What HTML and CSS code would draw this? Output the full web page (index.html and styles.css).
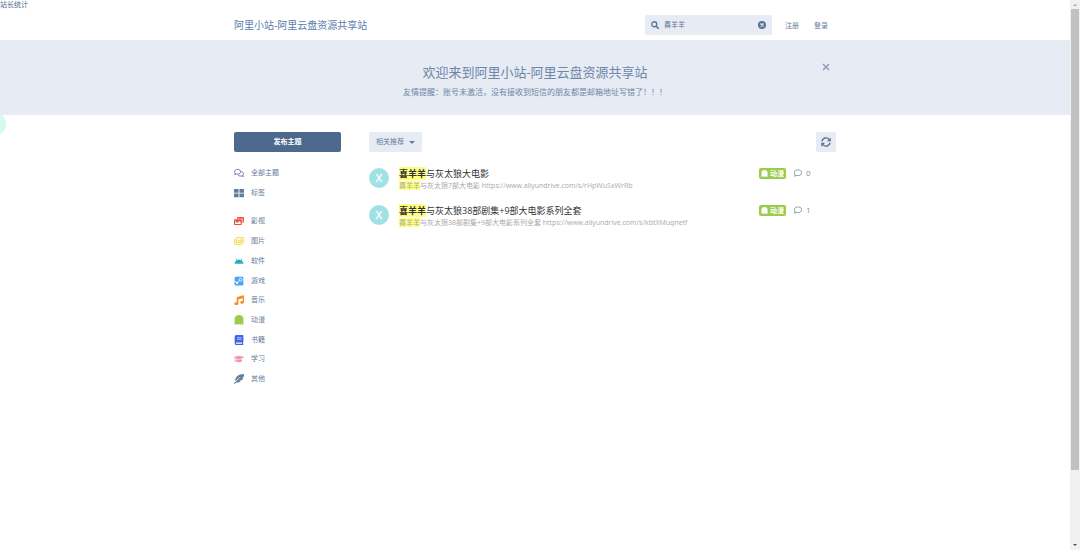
FILE: index.html
```html
<!DOCTYPE html>
<html lang="zh-CN">
<head>
    <meta charset="UTF-8">
    <meta name="viewport" content="width=device-width, initial-scale=1.0">
    <title>阿里小站-阿里云盘资源共享站</title>
    <link rel="stylesheet" href="styles.css">
</head>
<body>
    <svg class="sprite" aria-hidden="true">
        <symbol id="i-ghost" viewBox="0 0 16 16"><path d="M8 0C4 0 1 2.500 1 6v9.300l.8.500L4 14l2 2 2-2 2 2 2-2 2.200 1.800.8-.5V6c0-3.500-3-6-7-6z"/></symbol>
        <symbol id="i-comment" viewBox="0 0 512 512"><path d="M256 32C114.600 32 0 125.100 0 240c0 47.600 19.900 91.200 52.900 126.300C38 405.700 7 439.100 6.500 439.500c-6.600 7-8.400 17.200-4.600 26S14.400 480 24 480c61.500 0 110-25.700 139.100-46.300C192 442.800 223.200 448 256 448c141.400 0 256-93.100 256-208S397.400 32 256 32zm0 368c-26.700 0-53.100-4.100-78.400-12.100l-22.700-7.200-19.500 13.800c-14.300 10.100-33.900 21.400-57.500 29 7.300-12.100 14.400-25.700 19.900-40.200l10.600-28.100-20.600-21.800C69.700 314.100 48 282.200 48 240c0-88.200 93.300-160 208-160s208 71.800 208 160-93.300 160-208 160z"/></symbol>
    </svg>

    <a class="stats" href="#">站长统计</a>

    <header class="header">
        <div class="container header-row">
            <a class="site-title" href="#">阿里小站-阿里云盘资源共享站</a>
            <form class="search">
                <svg class="icon" viewBox="0 0 16 16"><circle cx="6.500" cy="6.500" r="5" fill="none" stroke="currentColor" stroke-width="2.600"/><path d="M10.500 10.500l4.200 4.200" stroke="currentColor" stroke-width="3" stroke-linecap="round"/></svg>
                <input type="text" value="喜羊羊" aria-label="搜索">
                <button type="button" class="clear" aria-label="清除">
                    <svg class="icon" viewBox="0 0 16 16"><circle cx="8" cy="8" r="8"/><path d="M5 5l6 6M11 5l-6 6" stroke="#e7ebf3" stroke-width="2.600"/></svg>
                </button>
            </form>
            <nav class="session">
                <a href="#">注册</a>
                <a href="#">登录</a>
            </nav>
        </div>
    </header>

    <section class="hero">
        <div class="container hero-inner">
            <button type="button" class="hero-close" aria-label="关闭">
                <svg class="icon" viewBox="0 0 16 16"><path d="M2 2l12 12M14 2L2 14" stroke="currentColor" stroke-width="3"/></svg>
            </button>
            <h1>欢迎来到阿里小站-阿里云盘资源共享站</h1>
            <p>友情提醒：账号未激活，没有接收到短信的朋友都是邮箱地址写错了！！！</p>
        </div>
    </section>

    <main class="container content">
        <aside class="sidebar">
            <button type="button" class="btn-primary">发布主题</button>
            <ul class="menu">
                <li><a href="#"><svg class="icon" viewBox="0 0 18 16"><path d="M6.500 1.500c3.200 0 5.600 1.900 5.600 4.300s-2.400 4.300-5.600 4.300c-.9 0-1.700-.1-2.400-.4L1.300 11l.9-2.500C1.400 7.800 1 6.800 1 5.800c0-2.400 2.400-4.300 5.500-4.300z" fill="none" stroke="currentColor" stroke-width="1.800"/><path d="M13.300 5.400c2.200.6 3.700 2 3.700 3.900 0 1-.4 1.900-1.100 2.600l1 2.400-2.900-1.100c-2.300.8-5.100.3-6.500-1.300" fill="none" stroke="currentColor" stroke-width="1.800"/></svg>全部主题</a></li>
                <li><a href="#"><svg class="icon" viewBox="0 0 16 16"><path d="M0 1.500h7.300v6H0zM8.700 1.500H16v6H8.700zM0 8.900h7.300v6H0zM8.700 8.900H16v6H8.700z"/></svg>标签</a></li>
                <li class="separator"></li>
                <li><a href="#"><svg class="icon red" viewBox="0 0 18 16"><path fill-rule="evenodd" d="M6 1h11q1 0 1 1v8q0 1-1 1h-2V5q0-1-1-1H5V2q0-1 1-1zm1 1v1.200h1.500V2zm7.500 0v1.200H16V2zm1.200 3v1.300h1.200V5zm0 3v1.300h1.200V8zM1 5h12q1 0 1 1v8q0 1-1 1H1q-1 0-1-1V6q0-1 1-1zm1 2v6.500h10v-3L9.500 8 6 11.500 4.500 10 3 11.500V7z"/></svg>影视</a></li>
                <li><a href="#"><svg class="icon yellow" viewBox="0 0 18 16"><path fill-rule="evenodd" d="M5 1h12q1 0 1 1v8q0 1.500-1.500 1.500h-12Q3 11.500 3 10V3q0-2 2-2zm.3 2v6.500h10.500V3zm1 5.500V7L8 5.500l1.500 1.300 3-3L15 6v2.500z"/><path d="M2 4v7q0 1.800 2 1.800h11.500Q15 15 13 15H2q-2 0-2-2V6q0-2 2-2z"/></svg>图片</a></li>
                <li><a href="#"><svg class="icon teal" viewBox="0 0 18 16"><path fill-rule="evenodd" d="M1 13c.2-3 1.600-5.200 3.900-6.500L3.300 3.800l.8-.5 1.700 2.800a9 9 0 0 1 6.400 0l1.700-2.800.8.500-1.600 2.700C15.400 7.800 16.800 10 17 13zm4.500-2.200a.8.800 0 1 0 0-1.600.8.800 0 0 0 0 1.600zm7 0a.8.800 0 1 0 0-1.600.8.800 0 0 0 0 1.600z"/></svg>软件</a></li>
                <li><a href="#"><svg class="icon blue" viewBox="0 0 16 16"><rect x="1" y="1" width="14" height="14" rx="2"/><path d="M1 8.500l4 2L8.500 8" fill="none" stroke="#fff" stroke-width="1.300"/><circle cx="5" cy="11" r="1.800" fill="#fff"/><circle cx="10.500" cy="6" r="2.300" fill="none" stroke="#fff" stroke-width="1.300"/></svg>游戏</a></li>
                <li><a href="#"><svg class="icon orange" viewBox="0 0 16 16"><path d="M5 3.200L15 .3q1-.2 1 .8v10.400c0 1.400-1.300 2.500-3 2.500s-3-.8-3-2.200 1.300-2.200 3-2.200l1 .1V5.200L7 7.300v6.200C7 15 5.700 16 3.700 16S.5 15.200.5 13.800s1.300-2.200 3-2.200l.8.100V4.200q0-.8.700-1z"/></svg>音乐</a></li>
                <li><a href="#"><svg class="icon green"><use href="#i-ghost"/></svg>动漫</a></li>
                <li><a href="#"><svg class="icon indigo" viewBox="0 0 16 16"><path fill-rule="evenodd" d="M4 0h10q1 0 1 1v10.300q0 .6-.5.9v1.900q.5.200.5.900t-1 1H4q-3 0-3-3V3q0-3 3-3zm1 4v1h7V4zm0 2.200v1h7v-1zM4 12q-1 0-1 1t1 1h8.700v-2z"/></svg>书籍</a></li>
                <li><a href="#"><svg class="icon pink" viewBox="0 0 18 16"><path d="M9 2l8.500 2.600q1 .5 0 1L9 8.400 3 6.500l-.8.400v2l.9 4.100H.6L1.400 9V6L.5 5.600q-1-.5 0-1z"/><path d="M4.300 7.900L9 9.400l4.700-1.500.5 4.100c-1.300 1.200-3 1.700-5.200 1.700S5.100 13.200 3.800 12z"/></svg>学习</a></li>
                <li><a href="#"><svg class="icon" viewBox="0 0 16 16"><path d="M16 .2C12-.3 7 1.500 4.300 4.500 2.200 6.900 1.800 9 2.100 11.300L9.500 4.700l.6.600L.3 14.500q-.5.700 0 1.200t1.200 0L3.600 13.600c2.600.5 5.400-.2 7.200-2l-2.400-.8 4.600-1.400c.7-.9 1.200-1.800 1.600-2.800l-2.100-.4 2.700-1.200C15.900 3.300 16.100 1.500 16 .2z"/></svg>其他</a></li>
            </ul>
        </aside>

        <div class="results">
            <div class="toolbar">
                <button type="button" class="btn">相关推荐 <span class="caret"></span></button>
                <button type="button" class="btn btn-icon" aria-label="刷新">
                    <svg class="icon" viewBox="0 0 16 16"><path d="M1.500 7A6.500 6.500 0 0 1 13 3.800M14.500 9A6.500 6.500 0 0 1 3 12.200" fill="none" stroke="currentColor" stroke-width="2.200"/><path d="M15.600.6v6.100H9.500zM.4 15.400V9.300h6.100z"/></svg>
                </button>
            </div>

            <ul class="discussions">
                <li class="discussion">
                    <span class="avatar">X</span>
                    <a class="summary" href="#">
                        <h3><mark>喜羊羊</mark>与灰太狼大电影</h3>
                        <p><mark>喜羊羊</mark>与灰太狼7部大电影 https://www.aliyundrive.com/s/rHpWuSxWrRb</p>
                    </a>
                    <span class="tag"><svg class="icon"><use href="#i-ghost"/></svg>动漫</span>
                    <span class="count"><svg class="icon"><use href="#i-comment"/></svg>0</span>
                </li>
                <li class="discussion">
                    <span class="avatar">X</span>
                    <a class="summary" href="#">
                        <h3><mark>喜羊羊</mark>与灰太狼38部剧集+9部大电影系列全套</h3>
                        <p><mark>喜羊羊</mark>与灰太狼38部剧集+9部大电影系列全套 https://www.aliyundrive.com/s/kbtXMuqnetf</p>
                    </a>
                    <span class="tag"><svg class="icon"><use href="#i-ghost"/></svg>动漫</span>
                    <span class="count"><svg class="icon"><use href="#i-comment"/></svg>1</span>
                </li>
            </ul>
        </div>
    </main>

    <div class="bubble"></div>

    <div class="scrollbar">
        <span class="arrow-up"></span>
        <span class="thumb"></span>
        <span class="arrow-down"></span>
    </div>
</body>
</html>
```
FILE: styles.css
```css
* {
    box-sizing: border-box;
}
body {
    margin: 0;
    padding-right: 10px;
    background: #fff;
    color: #667d99;
    font-family: "Open Sans", "Noto Sans CJK SC", sans-serif;
    font-size: 7px;
    line-height: 10px;
}
a {
    color: inherit;
    text-decoration: none;
}
button, input {
    font: inherit;
    color: inherit;
    border: 0;
    background: none;
    padding: 0;
}
ul {
    list-style: none;
    margin: 0;
    padding: 0;
}
h1, h3, p {
    margin: 0;
    font-weight: normal;
}
.sprite {
    position: absolute;
    width: 0;
    height: 0;
}
.icon {
    display: block;
    flex: none;
    width: 8px;
    height: 8px;
    fill: currentColor;
}
.container {
    width: 100%;
    max-width: 602px;
    margin: 0 auto;
}
.stats {
    position: absolute;
    top: 0;
    left: 0;
    color: #4d698e;
}

/* header */
.header {
    padding: 15px 0 5px;
}
.header-row {
    display: flex;
    align-items: center;
    height: 20px;
}
.site-title {
    flex: 1;
    color: #5a7cab;
    font-size: 10px;
}
.search {
    display: flex;
    align-items: center;
    gap: 5px;
    width: 127px;
    height: 20px;
    padding: 0 6px;
    border-radius: 2px;
    background: #e7ebf3;
    color: #5b7397;
}
.search input {
    flex: 1;
    min-width: 0;
    outline: 0;
}
.session {
    display: flex;
    gap: 15px;
    padding: 2px 8px 0 13px;
}

/* hero */
.hero {
    background: #e7ebf3;
    color: #6e87a8;
    text-align: center;
}
.hero-inner {
    position: relative;
    padding: 22px 0 16px;
}
.hero h1 {
    font-size: 13px;
    line-height: 20px;
}
.hero p {
    margin-top: 2px;
    font-size: 8px;
    line-height: 15px;
}
.hero-close {
    position: absolute;
    top: 23px;
    right: 6px;
    color: #8e9fb8;
}

/* content */
.content {
    display: flex;
    gap: 28px;
    padding-top: 17px;
}
.sidebar {
    width: 107px;
}
.btn-primary {
    display: block;
    width: 100%;
    height: 20px;
    border-radius: 2px;
    background: #4d698e;
    color: #fff;
    font-weight: bold;
}
.menu {
    display: flex;
    flex-direction: column;
    height: 226px;
    margin-top: 11px;
}
.menu li {
    flex: 1;
}
.menu a {
    display: flex;
    align-items: center;
    gap: 7px;
    height: 100%;
}
.menu .icon {
    width: 10px;
    height: 10px;
}
.menu .separator {
    flex: 0 0 9px;
}
.red { color: #ef4c40; }
.yellow { color: #fbdc63; }
.teal { color: #21aabd; }
.blue { color: #48a5f5; }
.orange { color: #fb8c2a; }
.green { color: #9bcb4a; }
.indigo { color: #4263eb; }
.pink { color: #f48fb1; }

.results {
    flex: 1;
    min-width: 0;
}
.toolbar {
    display: flex;
    justify-content: space-between;
}
.btn {
    display: flex;
    align-items: center;
    gap: 5px;
    height: 20px;
    padding: 0 7px;
    border-radius: 2px;
    background: #e7ebf3;
}
.btn-icon {
    padding: 0 5px;
    color: #58708f;
}
.btn-icon .icon {
    width: 10px;
    height: 10px;
}
.caret {
    border: 3px solid transparent;
    border-top-color: currentColor;
    border-bottom: 0;
}
.discussions {
    margin-top: 14px;
}
.discussion {
    display: flex;
    align-items: flex-start;
    height: 37px;
}
.avatar {
    width: 20px;
    height: 20px;
    margin: 2px 10px 0 0;
    border-radius: 50%;
    background: #a0e2e4;
    color: #fff;
    font-size: 11px;
    font-weight: 600;
    line-height: 20px;
    text-align: center;
}
.summary {
    flex: 1;
    min-width: 0;
    color: #aaa;
}
.summary h3 {
    color: #333;
    font-size: 9px;
    line-height: 15px;
}
.summary p {
    white-space: nowrap;
}
mark {
    background: #ffff80;
    color: inherit;
}
h3 mark {
    font-weight: bold;
}
.tag {
    display: flex;
    align-items: center;
    gap: 2px;
    height: 11px;
    margin-top: 2px;
    padding: 0 2px;
    border-radius: 2px;
    background: #9bcb4a;
    color: #fff;
    font-weight: bold;
}
.tag .icon {
    width: 7px;
    height: 7px;
}
.count {
    display: flex;
    align-items: center;
    gap: 4px;
    width: 50px;
    margin-top: 2px;
    padding-left: 8px;
    color: #7a8fab;
    font-size: 8px;
}

.bubble {
    position: absolute;
    top: 112px;
    left: -18px;
    width: 24px;
    height: 24px;
    border-radius: 50%;
    background: #d3fcee;
}

/* scrollbar */
.scrollbar {
    position: fixed;
    top: 0;
    right: 0;
    bottom: 0;
    display: flex;
    flex-direction: column;
    align-items: center;
    width: 10px;
    padding: 4px 0;
    background: #f1f1f1;
}
.arrow-up, .arrow-down {
    border: 2px solid transparent;
}
.arrow-up {
    border-top: 0;
    border-bottom-color: #a3a3a3;
}
.arrow-down {
    border-bottom: 0;
    border-top-color: #505050;
}
.thumb {
    width: 8px;
    height: 85%;
    margin: 3px 0 auto;
    background: #c1c1c1;
}
```
